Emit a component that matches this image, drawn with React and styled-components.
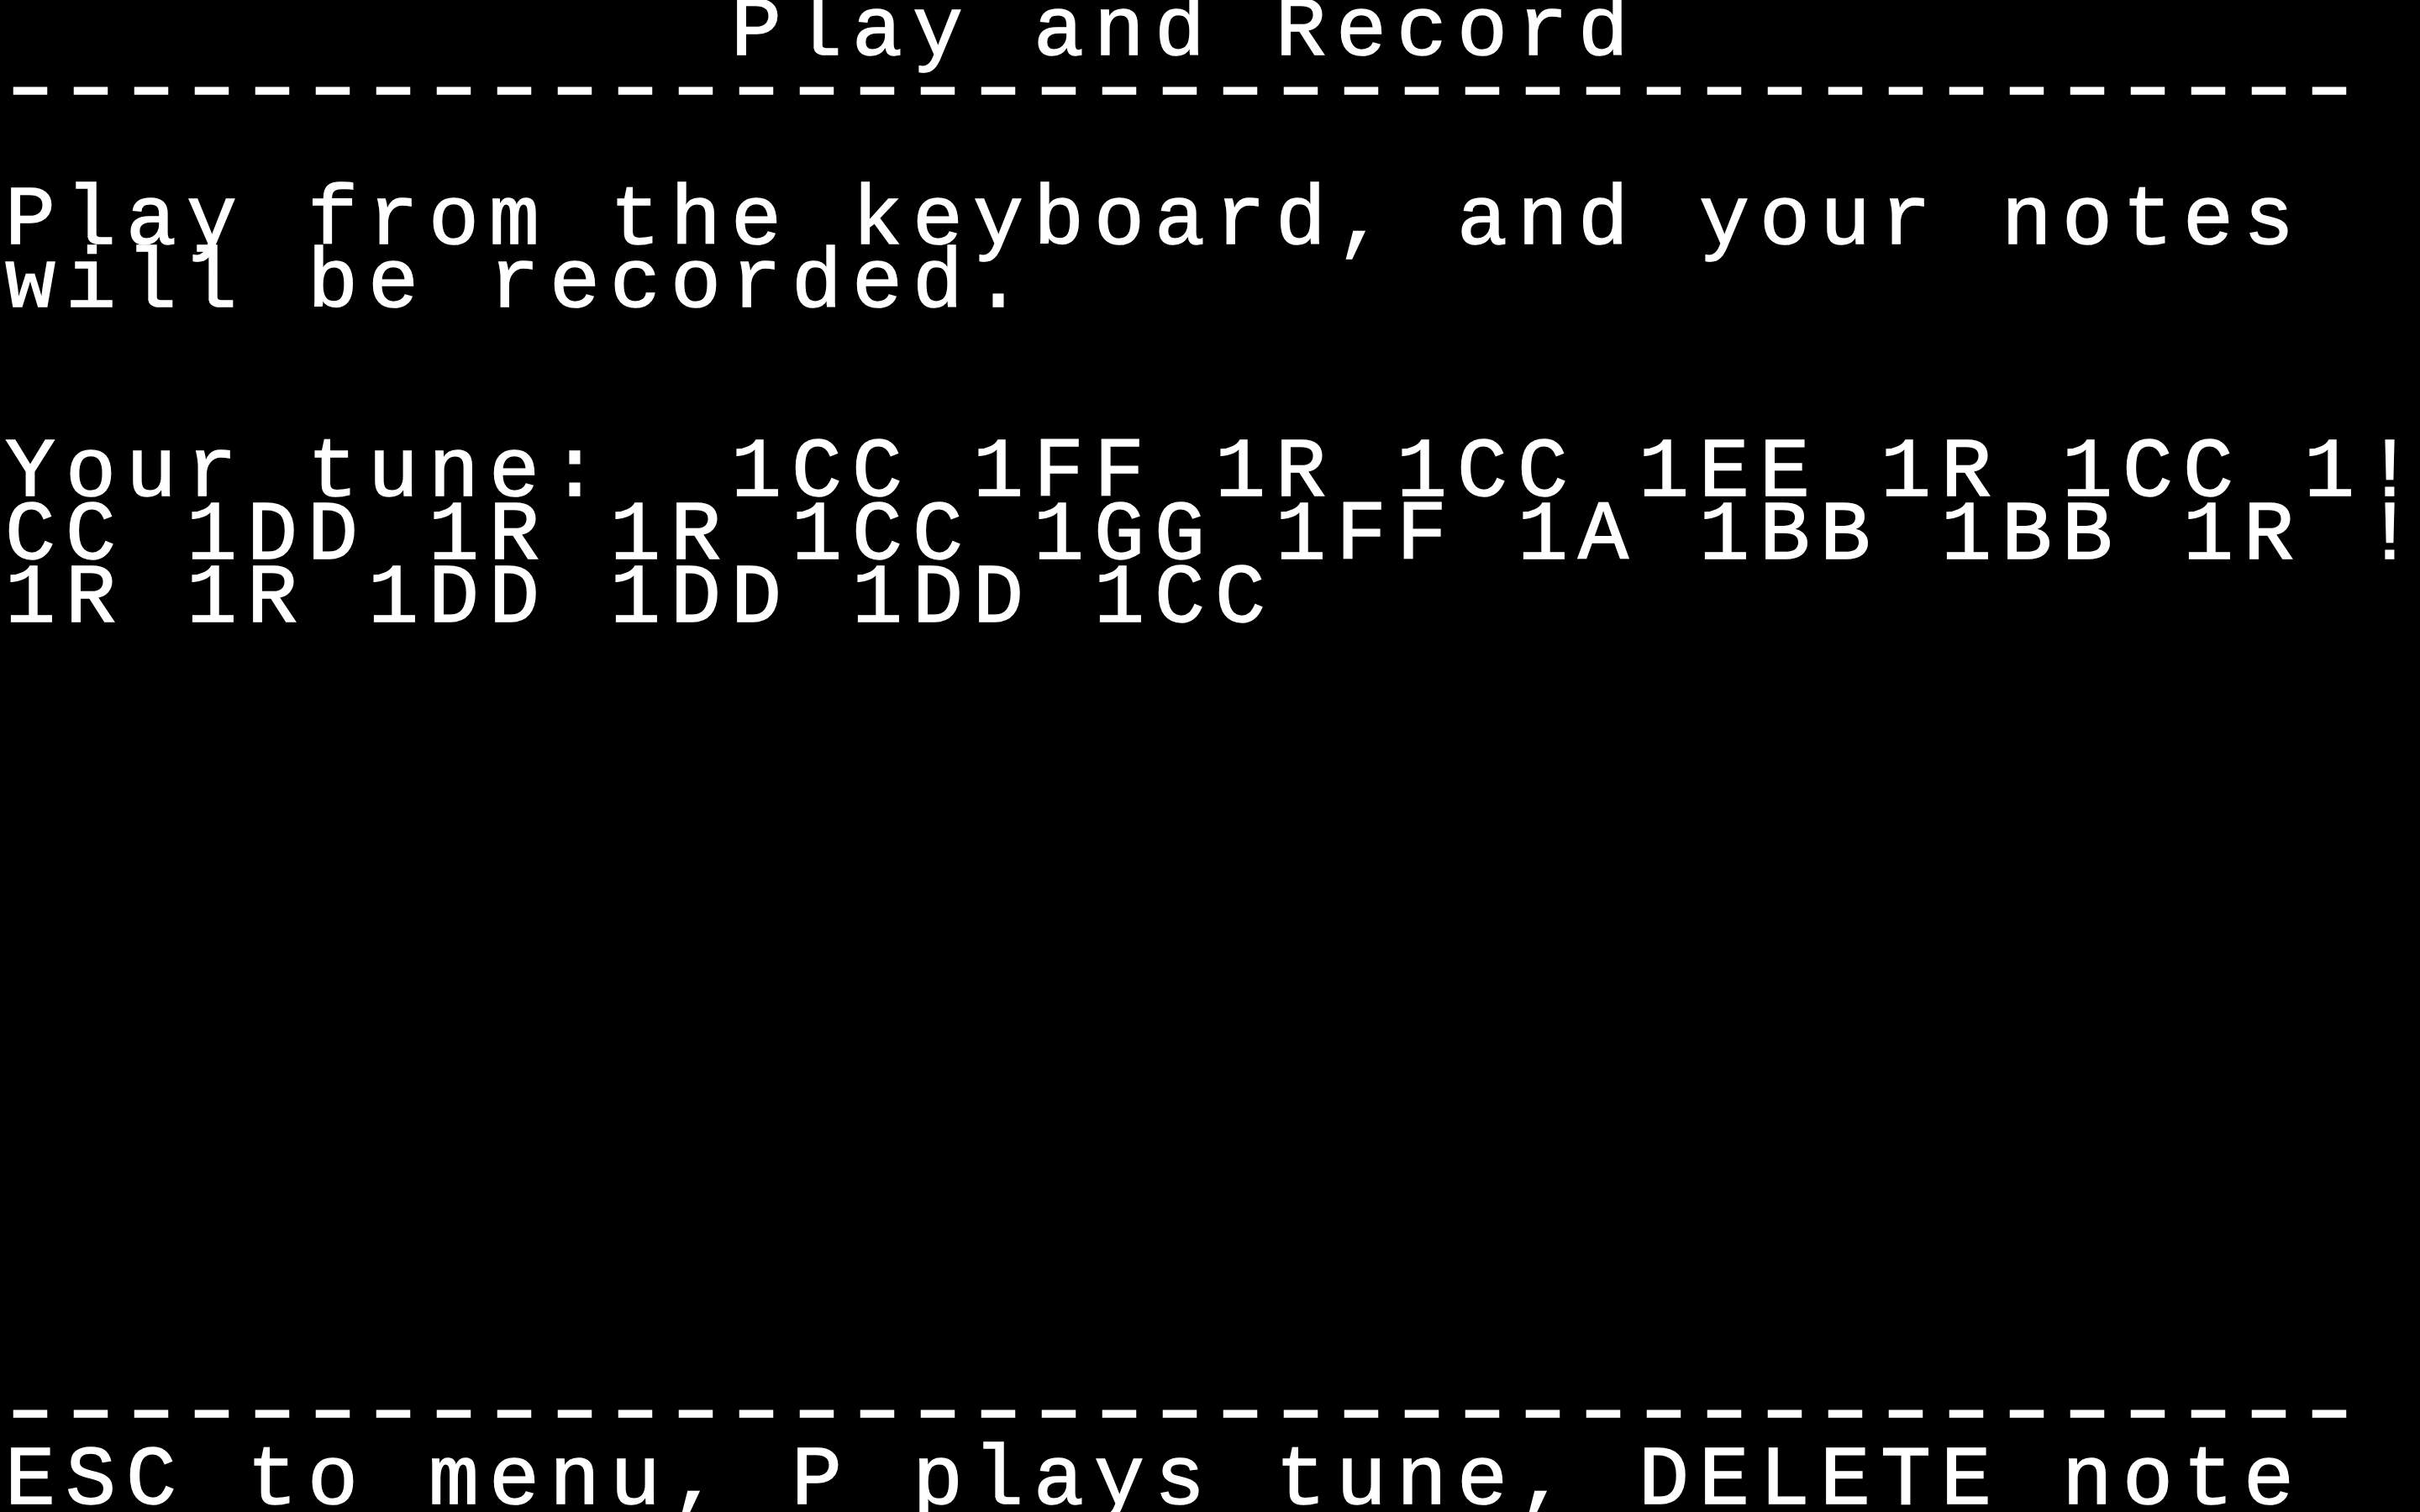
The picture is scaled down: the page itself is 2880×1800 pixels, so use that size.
import React from 'react';
import styled, { createGlobalStyle } from 'styled-components';

const COLS = 40;
const CELL_W = 72;
const CELL_H = 75;
const DASH_SCALE = 1.4;

const rule = '-'.repeat(39);

// blank rows are empty strings
const rows = [
  { text: '            Play and Record' },
  { text: rule, rule: true },
  { text: '' },
  { text: 'Play from the keyboard, and your notes' },
  { text: 'will be recorded.' },
  { text: '' },
  { text: '' },
  { text: 'Your tune:  1CC 1FF 1R 1CC 1EE 1R 1CC 1!' },
  { text: 'CC 1DD 1R 1R 1CC 1GG 1FF 1A 1BB 1BB 1R !' },
  { text: '1R 1R 1DD 1DD 1DD 1CC' },
  ...Array.from({ length: 12 }, () => ({ text: '' })),
  { text: rule, rule: true },
  { text: 'ESC to menu, P plays tune, DELETE note' },
];

const GlobalStyle = createGlobalStyle`
  html, body {
    margin: 0;
    padding: 0;
    background: #000;
  }
`;

const Screen = styled.main`
  display: grid;
  grid-template-rows: repeat(24, ${CELL_H}px);
  width: ${COLS * CELL_W}px;
  height: ${24 * CELL_H}px;
  overflow: hidden;
  background: #000;
  color: #fff;
  font-family: 'Liberation Mono', 'DejaVu Sans Mono', monospace;
  font-size: 100px;
  line-height: ${CELL_H}px;
  -webkit-text-stroke: 1.5px #fff;
`;

const Line = styled.div`
  height: ${CELL_H}px;
  padding: 1px 0 0 6px;
  box-sizing: border-box;
  white-space: pre;
  letter-spacing: 11.99px;
`;

// the pixel font's dash fills 5 of 7 dots, wider than the hyphen glyph
const Rule = styled.div`
  width: ${Math.floor((COLS * CELL_W) / DASH_SCALE)}px;
  height: ${CELL_H}px;
  white-space: pre;
  overflow: hidden;
  letter-spacing: ${CELL_W / DASH_SCALE - 60.01}px;
  transform-origin: 0 0;
  transform: translate(-6px, -4px) scaleX(${DASH_SCALE});
`;

const App = () => (
  <>
    <GlobalStyle />
    <Screen>
      {rows.map((row, i) =>
        row.rule ? <Rule key={i}>{row.text}</Rule> : <Line key={i}>{row.text}</Line>
      )}
    </Screen>
  </>
);

export default App;
